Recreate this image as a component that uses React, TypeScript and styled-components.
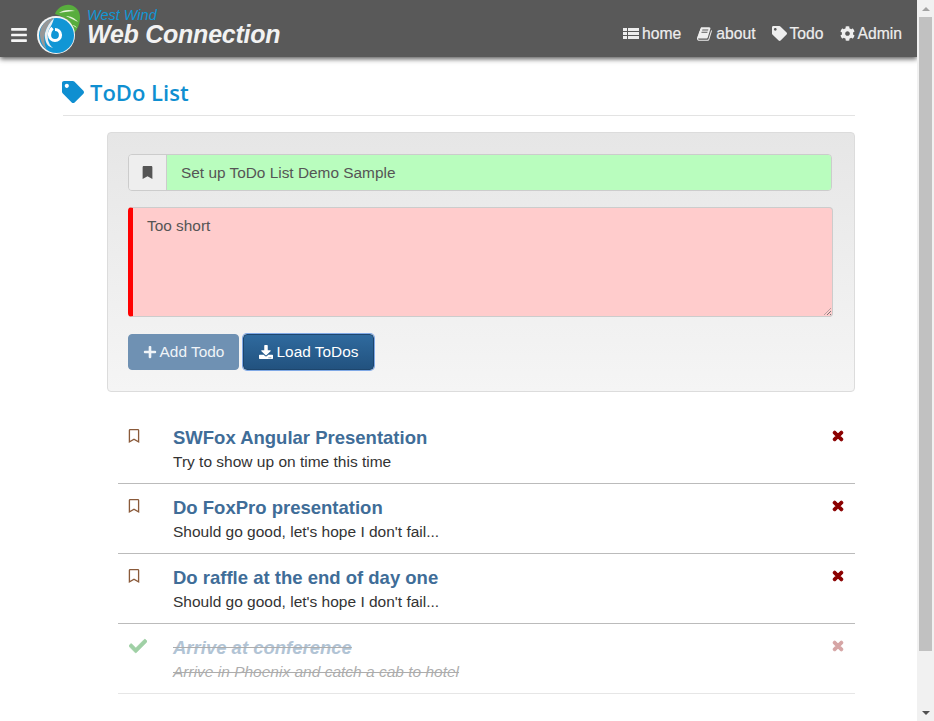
import React from "react";
import styled, { createGlobalStyle } from "styled-components";
import {
  FaBars,
  FaBookmark,
  FaCheck,
  FaCog,
  FaDownload,
  FaPlus,
  FaRegBookmark,
  FaTag,
  FaTimes,
} from "react-icons/fa";

const GlobalStyle = createGlobalStyle`
  * { box-sizing: border-box; }
  html, body { margin: 0; padding: 0; height: 100%; overflow: hidden; background: #fff; }
  body {
    font-family: "Liberation Sans", Arial, sans-serif;
    font-size: 15.4px;
    color: #333;
  }
`;

const todos = [
  { title: "SWFox Angular Presentation", description: "Try to show up on time this time", completed: false },
  { title: "Do FoxPro presentation", description: "Should go good, let's hope I don't fail...", completed: false },
  { title: "Do raffle at the end of day one", description: "Should go good, let's hope I don't fail...", completed: false },
  { title: "Arrive at conference", description: "Arrive in Phoenix and catch a cab to hotel", completed: true },
];

// font awesome 4 style list, the newer one in react-icons has fatter rows
const ListIcon = () => (
  <svg width="16" height="14" viewBox="0 0 16 14" fill="currentColor" aria-hidden="true">
    <path d="M0 1h4v3H0zM5 1h11v3H5zM0 5h4v3H0zM5 5h11v3H5zM0 9h4v3H0zM5 9h11v3H5z" />
  </svg>
);

const SlantedBook = () => (
  <svg width="16" height="16" viewBox="0 0 1792 1792" fill="currentColor" aria-hidden="true">
    <path d="M1639 478q40 57 18 129l-275 906q-19 64-76.5 107.5t-122.5 43.5h-923q-77 0-148.5-53.5t-99.5-131.5q-24-67-2-127 0-4 3-27t4-37q1-8-3-21.5t-3-19.5q2-11 8-21t16.5-23.5 16.5-23.5q23-38 45-91.5t30-91.5q3-10 .5-30t-.5-28q3-11 17-28t17-23q21-36 42-92t25-90q1-9-2.5-32t.5-28q4-13 22-30.5t22-22.5q19-26 42.5-84.5t27.5-96.5q1-8-3-25.5t-2-26.5q2-8 9-18t18-23 17-21q8-12 16.5-30.5t15-35 16-36 19.5-32 26.5-23.5 36-11.5 47.5 5.5l-1 3q38-9 51-9h761q74 0 114 56t18 130l-274 906q-36 119-71.5 153.5t-128.5 34.5h-869q-27 0-38 15-11 16-1 43 24 70 144 70h923q29 0 56-15.5t35-41.5l300-987q7-22 5-57 38 15 59 43zm-1064 2q-4 13 2 22.5t20 9.5h608q13 0 25.5-9.5t16.5-22.5l21-64q4-13-2-22.5t-20-9.5h-608q-13 0-25.5 9.5t-16.5 22.5zm-83 256q-4 13 2 22.5t20 9.5h608q13 0 25.5-9.5t16.5-22.5l21-64q4-13-2-22.5t-20-9.5h-608q-13 0-25.5 9.5t-16.5 22.5z" />
  </svg>
);

const navLinks = [
  { label: "home", icon: <ListIcon /> },
  { label: "about", icon: <SlantedBook /> },
  { label: "Todo", icon: <FaTag /> },
  { label: "Admin", icon: <FaCog /> },
];

const Logo = () => (
  <LogoSvg viewBox="0 0 44 50" aria-hidden="true">
    <path d="M18 10C20 4 27 0 33 1c6 1 10 6 10 12 0 6-2 12-6 16-1-6-4-11-8-14-3-2-7-4-11-5z" fill="#58ad3d" />
    <path d="M22 9c4-3 10-4 16-2-5 0-10 1-16 2zM29 12c4 0 9 2 12 6-4-2-8-4-12-6zM35 21c2 0 4 1 5 3-2-1-3-2-5-3z" fill="#e8f4dc" />
    <circle cx="19" cy="31" r="19" fill="#f4f4f4" />
    <circle cx="19.5" cy="31.5" r="17.5" fill="#1196d5" />
    <path d="M17 14C8 15 2.500 23 3 31.500 3.500 38 6 42 9.500 45.500 7.500 40 6.500 35 8 29 9.500 23 13 18 17 14z" fill="#979797" />
    <path d="M8 29c1.500-6 5-11 9-15-1 4-2 6-3 8-3 4-4 9-3 14 1 3 2 6 5 8-4-1-6-3-7-6-1-3-1.500-6-1-9z" fill="#e9eef1" />
    <path d="M18 25.500a5.500 5.500 0 1 1-5.500 5.500c0-3 1-5 3-7" fill="none" stroke="#fff" strokeWidth="3.200" />
  </LogoSvg>
);

export default function App() {
  return (
    <>
      <GlobalStyle />
      <Page>
        <Navbar>
          <Brand>
            <Burger><FaBars /></Burger>
            <Logo />
            <BrandText>
              <BrandTop>West Wind</BrandTop>
              <BrandName>Web Connection</BrandName>
            </BrandText>
          </Brand>
          <NavLinks>
            {navLinks.map((link) => (
              <NavLink key={link.label}>
                {link.icon}
                {link.label}
              </NavLink>
            ))}
          </NavLinks>
        </Navbar>

        <Container>
          <PageHeader>
            <FaTag />
            ToDo List
          </PageHeader>

          <Content>
            <FormWell>
              <InputGroup>
                <InputAddon><FaBookmark /></InputAddon>
                <TitleInput>Set up ToDo List Demo Sample</TitleInput>
              </InputGroup>
              <TextArea>Too short</TextArea>
              <Buttons>
                <AddButton><FaPlus />Add Todo</AddButton>
                <LoadButton><FaDownload />Load ToDos</LoadButton>
              </Buttons>
            </FormWell>

            <TodoList>
              {todos.map((todo) => (
                <TodoItem key={todo.title} $completed={todo.completed}>
                  <TodoIcon $completed={todo.completed}>
                    {todo.completed ? <FaCheck /> : <FaRegBookmark />}
                  </TodoIcon>
                  <TodoText $completed={todo.completed}>
                    <TodoTitle>{todo.title}</TodoTitle>
                    <TodoDescription>{todo.description}</TodoDescription>
                  </TodoText>
                  <RemoveIcon $completed={todo.completed}><FaTimes /></RemoveIcon>
                </TodoItem>
              ))}
            </TodoList>
          </Content>
        </Container>
      </Page>

      <Scrollbar>
        <ArrowUp />
        <Track><Thumb /></Track>
        <ArrowDown />
      </Scrollbar>
    </>
  );
}

const Page = styled.div`
  width: 917px;
  height: 721px;
  overflow: hidden;
`;

const Navbar = styled.header`
  height: 57px;
  padding: 0 15px 0 10px;
  display: flex;
  align-items: center;
  justify-content: space-between;
  background: #595959;
  box-shadow: 0 2px 5px rgba(0, 0, 0, 0.65);
`;

const Brand = styled.div`
  display: flex;
  align-items: center;
`;

const Burger = styled.span`
  display: flex;
  margin: 12px 9px 0 0;
  color: #f5f5f5;
  font-size: 18px;
`;

const LogoSvg = styled.svg`
  width: 44px;
  height: 50px;
  margin: 0 6px 0 0;
  flex: none;
`;

const BrandText = styled.div`
  display: flex;
  flex-direction: column;
  font-style: italic;
  margin-top: -2px;
`;

const BrandTop = styled.span`
  color: #1196d5;
  font-size: 14.5px;
  line-height: 12px;
`;

const BrandName = styled.span`
  color: #f2f2f2;
  font-size: 25px;
  font-weight: 700;
  line-height: 26px;
  letter-spacing: -0.25px;
`;

const NavLinks = styled.nav`
  display: flex;
  gap: 16px;
  margin-top: 10px;
`;

const NavLink = styled.a`
  display: flex;
  align-items: center;
  gap: 3px;
  color: #eee;
  font-size: 15.7px;
  -webkit-text-stroke: 0.2px #eee;
  svg { font-size: 15px; }
`;

const Container = styled.main`
  padding: 0 62px 0 63px;
`;

const PageHeader = styled.h1`
  margin: 21px 0 16px;
  height: 38px;
  padding-bottom: 9px;
  display: flex;
  align-items: center;
  gap: 6px;
  border-bottom: 1px solid #e3e3e3;
  color: #0f8fd1;
  font-family: "Open Sans", sans-serif;
  font-size: 22px;
  font-weight: 600;
  svg { margin-left: -1px; }
`;

const Content = styled.div`
  padding-left: 44px;
`;

const FormWell = styled.section`
  height: 260px;
  padding: 21px 21px 20px 20px;
  border: 1px solid #dcdcdc;
  border-radius: 4px;
  background: linear-gradient(to bottom, #e6e6e6, #f5f5f5);
`;

const InputGroup = styled.div`
  display: flex;
  height: 37px;
  margin-right: 1px;
  border: 1px solid #ccc;
  border-radius: 4px;
  overflow: hidden;
`;

const InputAddon = styled.span`
  width: 38px;
  display: flex;
  align-items: center;
  justify-content: center;
  background: #eee;
  border-right: 1px solid #ccc;
  color: #555;
  font-size: 13px;
`;

const TitleInput = styled.div`
  flex: 1;
  padding-left: 14px;
  display: flex;
  align-items: center;
  background: #b9fdbe;
  color: #555;
`;

const TextArea = styled.div`
  height: 110px;
  margin-top: 16px;
  padding: 9px 14px;
  background: #fcc;
  border: 1px solid #ccc;
  border-left: 5px solid #f00;
  border-radius: 4px;
  color: #555;
  position: relative;

  &::after {
    content: "";
    position: absolute;
    right: 1px;
    bottom: 1px;
    width: 7px;
    height: 7px;
    background: repeating-linear-gradient(135deg, transparent 0 1.5px, #777 1.5px 2.5px);
    clip-path: polygon(100% 0, 100% 100%, 0 100%);
  }
`;

const Buttons = styled.div`
  display: flex;
  gap: 4px;
  margin-top: 17px;
`;

const Button = styled.button`
  height: 36px;
  display: flex;
  align-items: center;
  justify-content: center;
  gap: 3px;
  border-radius: 4px;
  color: #fff;
  font: inherit;
  svg { font-size: 14px; }
`;

const AddButton = styled(Button)`
  width: 111px;
  background: #6f91b3;
  border: 1px solid #6f91b3;
  color: #f0f4f8;
`;

const LoadButton = styled(Button)`
  width: 131px;
  gap: 4px;
  background: linear-gradient(to bottom, #2f6a9e, #22527f);
  border: 1px solid #1d466e;
  box-shadow: 0 0 0 1px #80a9e6;
`;

const TodoList = styled.ul`
  list-style: none;
  margin: 22px 0 0;
  padding: 0 0 0 11px;
`;

const TodoItem = styled.li<{ $completed: boolean }>`
  height: 70px;
  padding: 14px 11px 0 10px;
  display: flex;
  border-bottom: 1px solid ${(p) => (p.$completed ? "#e6e6e6" : "#bbb")};
`;

const TodoIcon = styled.span<{ $completed: boolean }>`
  width: 45px;
  flex: none;
  color: ${(p) => (p.$completed ? "#9fd0a5" : "#8a5a3a")};
  font-size: ${(p) => (p.$completed ? "18px" : "14px")};
  line-height: 1;
  svg {
    display: block;
    margin: ${(p) => (p.$completed ? "-1px 0 0 1px" : "1px 0 0 -1px")};
    ${(p) => p.$completed && "stroke: currentColor; stroke-width: 20;"}
  }
`;

const TodoText = styled.div<{ $completed: boolean }>`
  flex: 1;
  ${(p) => p.$completed && "font-style: italic; text-decoration: line-through; opacity: 0.4;"}
`;

const TodoTitle = styled.div`
  color: #3f6d98;
  font-size: 18.5px;
  font-weight: 700;
  line-height: 20px;
`;

const TodoDescription = styled.div`
  margin-top: 5px;
  color: #333;
  font-size: 15.5px;
  line-height: 18px;
`;

const RemoveIcon = styled.span<{ $completed: boolean }>`
  color: #8b0000;
  opacity: ${(p) => (p.$completed ? 0.35 : 1)};
  font-size: 14px;
  line-height: 1;
  svg {
    display: block;
    margin: 1px -1px 0 0;
    stroke: currentColor;
    stroke-width: 40;
  }
`;

const Scrollbar = styled.div`
  position: fixed;
  top: 0;
  right: 0;
  bottom: 0;
  width: 17px;
  display: flex;
  flex-direction: column;
  background: #f1f1f1;
`;

const ArrowUp = styled.div`
  height: 17px;
  flex: none;
  display: flex;
  align-items: center;
  justify-content: center;
  &::before {
    content: "";
    border: 4px solid transparent;
    border-top: 0;
    border-bottom: 4px solid #a3a3a3;
  }
`;

const ArrowDown = styled.div`
  height: 17px;
  flex: none;
  display: flex;
  align-items: center;
  justify-content: center;
  &::before {
    content: "";
    border: 4px solid transparent;
    border-bottom: 0;
    border-top: 4px solid #505050;
  }
`;

const Track = styled.div`
  flex: 1;
  padding: 0 2px;
`;

const Thumb = styled.div`
  height: 634px;
  background: #c1c1c1;
`;
